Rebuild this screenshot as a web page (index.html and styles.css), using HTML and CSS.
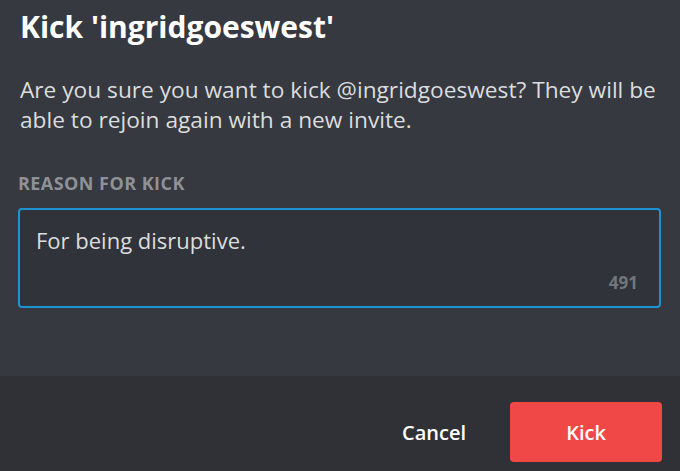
FILE: index.html
```html
<!DOCTYPE html>
<html>
<head>
<meta charset="utf-8">
<link rel="stylesheet" href="styles.css">
</head>
<body>
<div class="modal">
  <div class="content">
    <h1 class="title">Kick 'ingridgoeswest'</h1>
    <p class="desc">Are you sure you want to kick @ingridgoeswest? They will be able to rejoin again with a new invite.</p>
    <div class="label">Reason for kick</div>
    <div class="field">
      <div class="field-text">For being disruptive.</div>
      <div class="counter">491</div>
    </div>
  </div>
  <div class="footer">
    <button class="btn-cancel">Cancel</button>
    <button class="btn-kick">Kick</button>
  </div>
</div>
</body>
</html>
```
FILE: styles.css
```css
html, body {
  margin: 0;
  padding: 0;
  background: #36393f;
}
body {
  width: 680px;
  height: 471px;
  overflow: hidden;
  font-family: "Open Sans", "Noto Sans", sans-serif;
}
.modal {
  display: flex;
  flex-direction: column;
  height: 471px;
}
.content {
  height: 376px;
  box-sizing: border-box;
  padding: 9px 12px 0 20px;
  background: #36393f;
}
.title {
  margin: 0;
  font-size: 30px;
  line-height: 36px;
  font-weight: 700;
  color: #ffffff;
}
.desc {
  margin: 30px 0 0 0;
  font-size: 22.7px;
  line-height: 30px;
  color: #dcddde;
}
.label {
  margin: 37px 0 0 -2px;
  font-size: 18px;
  line-height: 22px;
  font-weight: 700;
  letter-spacing: 0.45px;
  text-transform: uppercase;
  color: #8e9297;
}
.field {
  margin: 14px 0 0 -2px;
  width: 643px;
  height: 100px;
  box-sizing: border-box;
  border: 2px solid #1f92d3;
  border-radius: 4px;
  background: #303339;
  padding: 16px 21px 0 16px;
  display: flex;
  flex-direction: column;
}
.field-text {
  font-size: 22px;
  line-height: 28px;
  color: #dcddde;
}
.counter {
  align-self: flex-end;
  margin-top: 19px;
  font-size: 17px;
  line-height: 20px;
  font-weight: 700;
  color: #72767d;
}
.footer {
  flex: 1;
  background: #2f3136;
  display: flex;
  align-items: flex-start;
  justify-content: flex-end;
  padding: 26px 18px 0 0;
  gap: 28px;
}
.btn-cancel, .btn-kick {
  font-family: "Open Sans", "Noto Sans", sans-serif;
  font-size: 20px;
  font-weight: 600;
  color: #ffffff;
  border: none;
  cursor: pointer;
}
.btn-cancel {
  background: transparent;
  height: 60px;
  padding: 0 16px;
}
.btn-kick {
  background: #f04747;
  width: 152px;
  height: 60px;
  border-radius: 4px;
}
```
